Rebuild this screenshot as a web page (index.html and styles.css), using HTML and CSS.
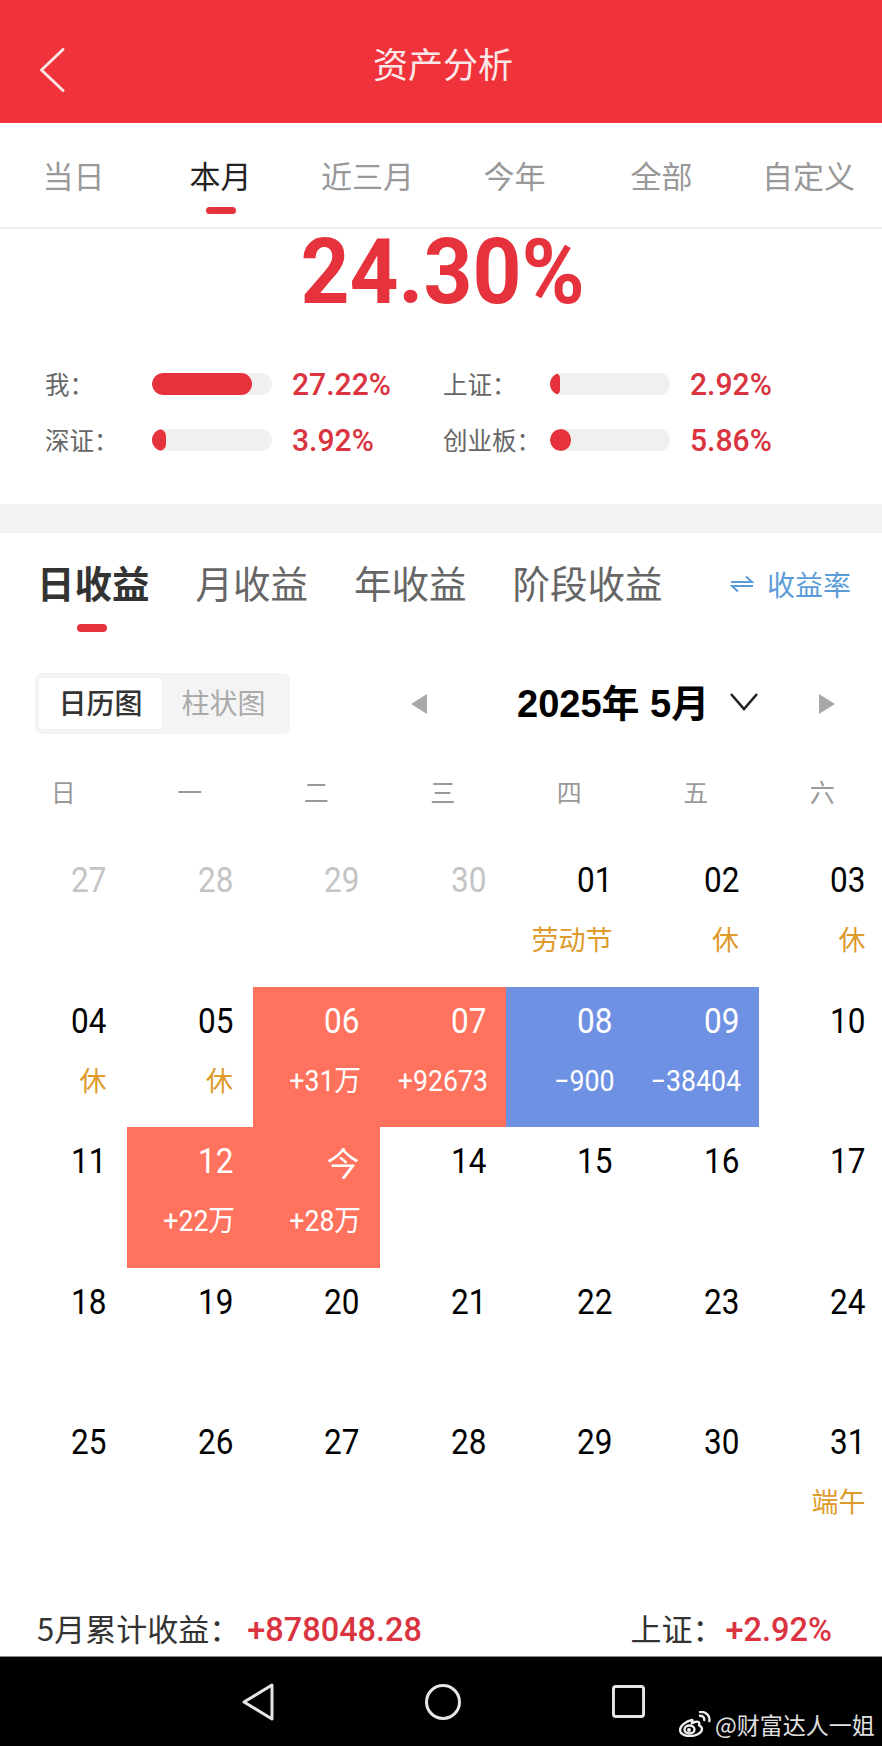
FILE: index.html
```html
<!DOCTYPE html>
<html lang="zh">
<head>
<meta charset="utf-8">
<title>资产分析</title>
<link rel="stylesheet" href="styles.css">
</head>
<body>
<div class="page">
  <header class="topbar">
    <svg class="back" viewBox="0 0 26 44" width="26" height="44"><path d="M24 1.5 2.5 22 24 42.500" fill="none" stroke="#fbe3e4" stroke-width="3" stroke-linecap="round" stroke-linejoin="round"/></svg>
    <h1 class="title">资产分析</h1>
  </header>
  <nav class="range">
    <span class="range-tab">当日</span>
    <span class="range-tab on">本月</span>
    <span class="range-tab">近三月</span>
    <span class="range-tab">今年</span>
    <span class="range-tab">全部</span>
    <span class="range-tab">自定义</span>
  </nav>
  <section class="summary">
    <div class="big"><span class="big-num">24.30%</span></div>
    <div class="stats">
      <div class="stat"><span class="stat-label">我：</span><span class="track"><i class="fill" style="width:100px"></i></span><span class="stat-val">27.22%</span></div>
      <div class="stat"><span class="stat-label">上证：</span><span class="track"><i class="fill" style="width:10px"></i></span><span class="stat-val">2.92%</span></div>
      <div class="stat"><span class="stat-label">深证：</span><span class="track"><i class="fill" style="width:14px"></i></span><span class="stat-val">3.92%</span></div>
      <div class="stat"><span class="stat-label">创业板：</span><span class="track"><i class="fill" style="width:21px"></i></span><span class="stat-val">5.86%</span></div>
    </div>
  </section>
  <div class="band"></div>
  <section class="profit">
    <div class="profit-tabs">
      <span class="ptab on">日收益</span>
      <span class="ptab">月收益</span>
      <span class="ptab">年收益</span>
      <span class="ptab">阶段收益</span>
      <span class="rate">
        <svg viewBox="0 0 24 18" width="24" height="18"><path d="M1 7h21L16 1.500M23 11H2l6 5.500" fill="none" stroke="#5b9bd8" stroke-width="2"/></svg>
        收益率
      </span>
    </div>
    <div class="controls">
      <div class="toggle"><span class="toggle-item on">日历图</span><span class="toggle-item">柱状图</span></div>
      <div class="month">
        <svg class="tri" viewBox="0 0 16 20" width="16" height="20"><path d="M16 0v20L0 10z" fill="#a8a8a8"/></svg>
        <span class="month-name">2025年 5月</span>
        <svg class="chev" viewBox="0 0 28 18" width="28" height="18"><path d="M1 1l13 15L27 1" fill="none" stroke="#222" stroke-width="2.600"/></svg>
        <svg class="tri next" viewBox="0 0 16 20" width="16" height="20"><path d="M0 0v20l16-10z" fill="#a8a8a8"/></svg>
      </div>
    </div>
    <div class="weekdays">
      <span>日</span><span>一</span><span>二</span><span>三</span><span>四</span><span>五</span><span>六</span>
    </div>
    <div class="cal">
      <div class="day past"><b>27</b></div>
      <div class="day past"><b>28</b></div>
      <div class="day past"><b>29</b></div>
      <div class="day past"><b>30</b></div>
      <div class="day"><b>01</b><em>劳动节</em></div>
      <div class="day"><b>02</b><em>休</em></div>
      <div class="day"><b>03</b><em>休</em></div>

      <div class="day"><b>04</b><em>休</em></div>
      <div class="day"><b>05</b><em>休</em></div>
      <div class="day up"><b>06</b><u>+31万</u></div>
      <div class="day up"><b>07</b><u>+92673</u></div>
      <div class="day down"><b>08</b><u>−900</u></div>
      <div class="day down"><b>09</b><u>−38404</u></div>
      <div class="day"><b>10</b></div>

      <div class="day"><b>11</b></div>
      <div class="day up"><b>12</b><u>+22万</u></div>
      <div class="day up"><b class="today">今</b><u>+28万</u></div>
      <div class="day"><b>14</b></div>
      <div class="day"><b>15</b></div>
      <div class="day"><b>16</b></div>
      <div class="day"><b>17</b></div>

      <div class="day"><b>18</b></div>
      <div class="day"><b>19</b></div>
      <div class="day"><b>20</b></div>
      <div class="day"><b>21</b></div>
      <div class="day"><b>22</b></div>
      <div class="day"><b>23</b></div>
      <div class="day"><b>24</b></div>

      <div class="day"><b>25</b></div>
      <div class="day"><b>26</b></div>
      <div class="day"><b>27</b></div>
      <div class="day"><b>28</b></div>
      <div class="day"><b>29</b></div>
      <div class="day"><b>30</b></div>
      <div class="day"><b>31</b><em>端午</em></div>
    </div>
    <div class="totals">
      <span class="total-left">5月累计收益：<span class="gain gain-left">+878048.28</span></span>
      <span class="total-right">上证：<span class="gain">+2.92%</span></span>
    </div>
  </section>
  <footer class="navbar">
    <svg viewBox="0 0 32 38" width="32" height="38"><path d="M30 2 2 19l28 17z" fill="none" stroke="#e6e6e6" stroke-width="3" stroke-linejoin="round"/></svg>
    <svg viewBox="0 0 36 36" width="36" height="36"><circle cx="18" cy="18" r="16.500" fill="none" stroke="#e6e6e6" stroke-width="3"/></svg>
    <svg viewBox="0 0 34 34" width="33" height="33"><rect x="1.500" y="1.500" width="31" height="31" rx="2.500" fill="none" stroke="#e6e6e6" stroke-width="3"/></svg>
  </footer>
  <div class="mark">
    <svg viewBox="0 0 32 26" width="32" height="26"><g fill="none" stroke="#eee" stroke-width="2.400"><path d="M13 9C7 10 1 15 1 19c0 4 5 6 10 6 6 0 12-3 12-7 0-3-3-3-3-4 1-3-1-4-4-3l-3 1c0-2 1-3 0-3z"/><ellipse cx="10.500" cy="18.500" rx="5" ry="4"/><path d="M20 5c4-1 6 2 5 5M20 1c7-1 12 4 10 10"/></g><circle cx="10" cy="19" r="2" fill="#eee"/></svg>
    <span>@财富达人一姐</span>
  </div>
</div>
</body>
</html>
```
FILE: styles.css
```css
* { box-sizing: border-box; }
html, body { margin: 0; padding: 0; background: #fff; }
body {
  font-family: "Noto Sans CJK SC", "Noto Sans", sans-serif;
  color: #222;
}
.page {
  position: relative;
  width: 882px;
  height: 1746px;
  overflow: hidden;
  display: flex;
  flex-direction: column;
}
.topbar {
  height: 123px;
  flex: none;
  background: #f0323a;
  display: flex;
  align-items: center;
  justify-content: center;
  position: relative;
}
.back { position: absolute; left: 39px; top: 48px; }
.title {
  margin: 0;
  padding: 3px 0 0 4px;
  font-size: 35px;
  font-weight: 400;
  color: #fbe9ea;
  line-height: 48px;
}
.range {
  flex: none;
  height: 106px;
  display: grid;
  grid-template-columns: repeat(6, 147px);
  border-bottom: 2px solid #eee;
}
.range-tab {
  position: relative;
  text-align: center;
  font-size: 31px;
  line-height: 44px;
  padding-top: 30px;
  color: #999;
}
.range-tab.on { color: #222; }
.range-tab.on::after {
  content: "";
  position: absolute;
  left: 59px;
  top: 84px;
  width: 30px;
  height: 7px;
  border-radius: 4px;
  background: #e5323c;
}
.summary { flex: none; height: 275px; }
.big {
  text-align: center;
  font-family: Roboto, sans-serif;
  font-weight: 700;
  font-size: 90px;
  line-height: 90px;
  color: #e5323c;
  margin-top: -1px;
  padding-left: 4px;
}
.big-num { display: inline-block; transform: scaleX(.95); }
.stats {
  margin: 55px 0 0 45px;
  display: grid;
  grid-template-columns: 398px 399px;
  row-gap: 34px;
}
.stat { display: flex; align-items: center; height: 22px; }
.stat-label {
  width: 107px;
  font-size: 24.500px;
  color: #666;
  line-height: 22px;
}
.track {
  width: 120px;
  height: 22px;
  border-radius: 11px;
  background: #f0f0f0;
  display: block;
  overflow: hidden;
}
.fill {
  display: block;
  height: 22px;
  border-radius: 11px;
  background: #e5323c;
}
.stat-val {
  margin-left: 20px;
  padding-top: 1px;
  font-family: Roboto, sans-serif;
  font-weight: 500;
  font-size: 31px;
  color: #d9343f;
  line-height: 22px;
  transform: scaleX(.97);
  transform-origin: left center;
}
.band { flex: none; height: 29px; background: #f2f3f5; }
.profit { flex: 1; min-height: 0; }
.profit-tabs {
  height: 140px;
  padding: 22px 0 0 37px;
  display: flex;
  align-items: flex-start;
  position: relative;
}
.ptab {
  font-size: 37.500px;
  line-height: 54px;
  color: #666;
  margin-right: 46px;
}
.ptab.on {
  color: #333;
  font-weight: 700;
  position: relative;
}
.ptab.on::after {
  content: "";
  position: absolute;
  left: 40px;
  top: 69px;
  width: 30px;
  height: 8px;
  border-radius: 4px;
  background: #e5323c;
}
.rate {
  position: absolute;
  left: 730px;
  top: 31px;
  display: flex;
  align-items: center;
  gap: 13px;
  font-size: 28px;
  line-height: 40px;
  color: #5b9bd8;
}
.controls {
  height: 61px;
  padding-left: 35px;
  display: flex;
  align-items: center;
}
.toggle {
  width: 255px;
  height: 61px;
  padding: 5px 4px;
  border-radius: 7px;
  background: #f4f4f4;
  display: flex;
}
.toggle-item {
  width: 123px;
  height: 51px;
  border-radius: 3px;
  text-align: center;
  font-size: 28px;
  line-height: 49px;
  color: #aaa;
}
.toggle-item.on { background: #fff; color: #333; font-weight: 500; }
.month {
  margin-left: 121px;
  display: flex;
  align-items: center;
}
.month-name {
  margin-left: 90px;
  font-family: "Liberation Sans", "Noto Sans CJK SC", sans-serif;
  font-weight: 700;
  font-size: 38px;
  line-height: 48px;
  color: #000;
  width: 213px;
  white-space: pre;
}
.chev { flex: none; margin-right: 61px; margin-top: -4px; }
.weekdays {
  margin-top: 39px;
  height: 73px;
  display: grid;
  grid-template-columns: repeat(7, 126.500px);
}
.weekdays span {
  text-align: center;
  font-size: 25px;
  line-height: 36px;
  color: #999;
}
.cal {
  display: grid;
  grid-template-columns: repeat(7, 126.500px);
  grid-auto-rows: 140.500px;
}
.day {
  padding: 15px 20px 0 0;
  display: flex;
  flex-direction: column;
  align-items: flex-end;
  color: #000;
}
.day b {
  font-family: Roboto, sans-serif;
  font-weight: 400;
  font-size: 35px;
  line-height: 40px;
  transform: scaleX(.9);
  transform-origin: right center;
}
.day b.today {
  font-family: "Noto Sans CJK SC", sans-serif;
  font-size: 33px;
  transform: none;
}
.day em {
  margin-top: 18px;
  font-style: normal;
  font-size: 27px;
  line-height: 40px;
  color: #de9a2a;
}
.day u {
  margin: 19px -2px 0 0;
  text-decoration: none;
  font-family: Roboto, "Noto Sans CJK SC", sans-serif;
  font-size: 29px;
  line-height: 40px;
  color: #fff;
  transform: scaleX(.92);
  transform-origin: right center;
}
.past b { color: #c4c4c4; }
.up { background: #ff725e; color: #fff; }
.down { background: #6f91e4; color: #fff; }
.totals {
  margin-top: 57px;
  padding: 0 50px 0 37px;
  display: flex;
  justify-content: space-between;
  font-size: 31px;
  line-height: 44px;
  color: #333;
}
.gain {
  font-family: Roboto, sans-serif;
  font-weight: 500;
  font-size: 32.500px;
  color: #d9343f;
  margin-left: 2px;
}
.gain-left { margin-left: 7px; }
.navbar {
  flex: none;
  height: 90px;
  background: #000;
  border-top: 1px solid #888;
  display: flex;
  align-items: center;
  padding-left: 242px;
  gap: 151px;
}
.mark {
  position: absolute;
  left: 679px;
  top: 1711px;
  display: flex;
  align-items: center;
  gap: 4px;
  font-size: 23px;
  line-height: 26px;
  color: #e0e0e0;
}
```
